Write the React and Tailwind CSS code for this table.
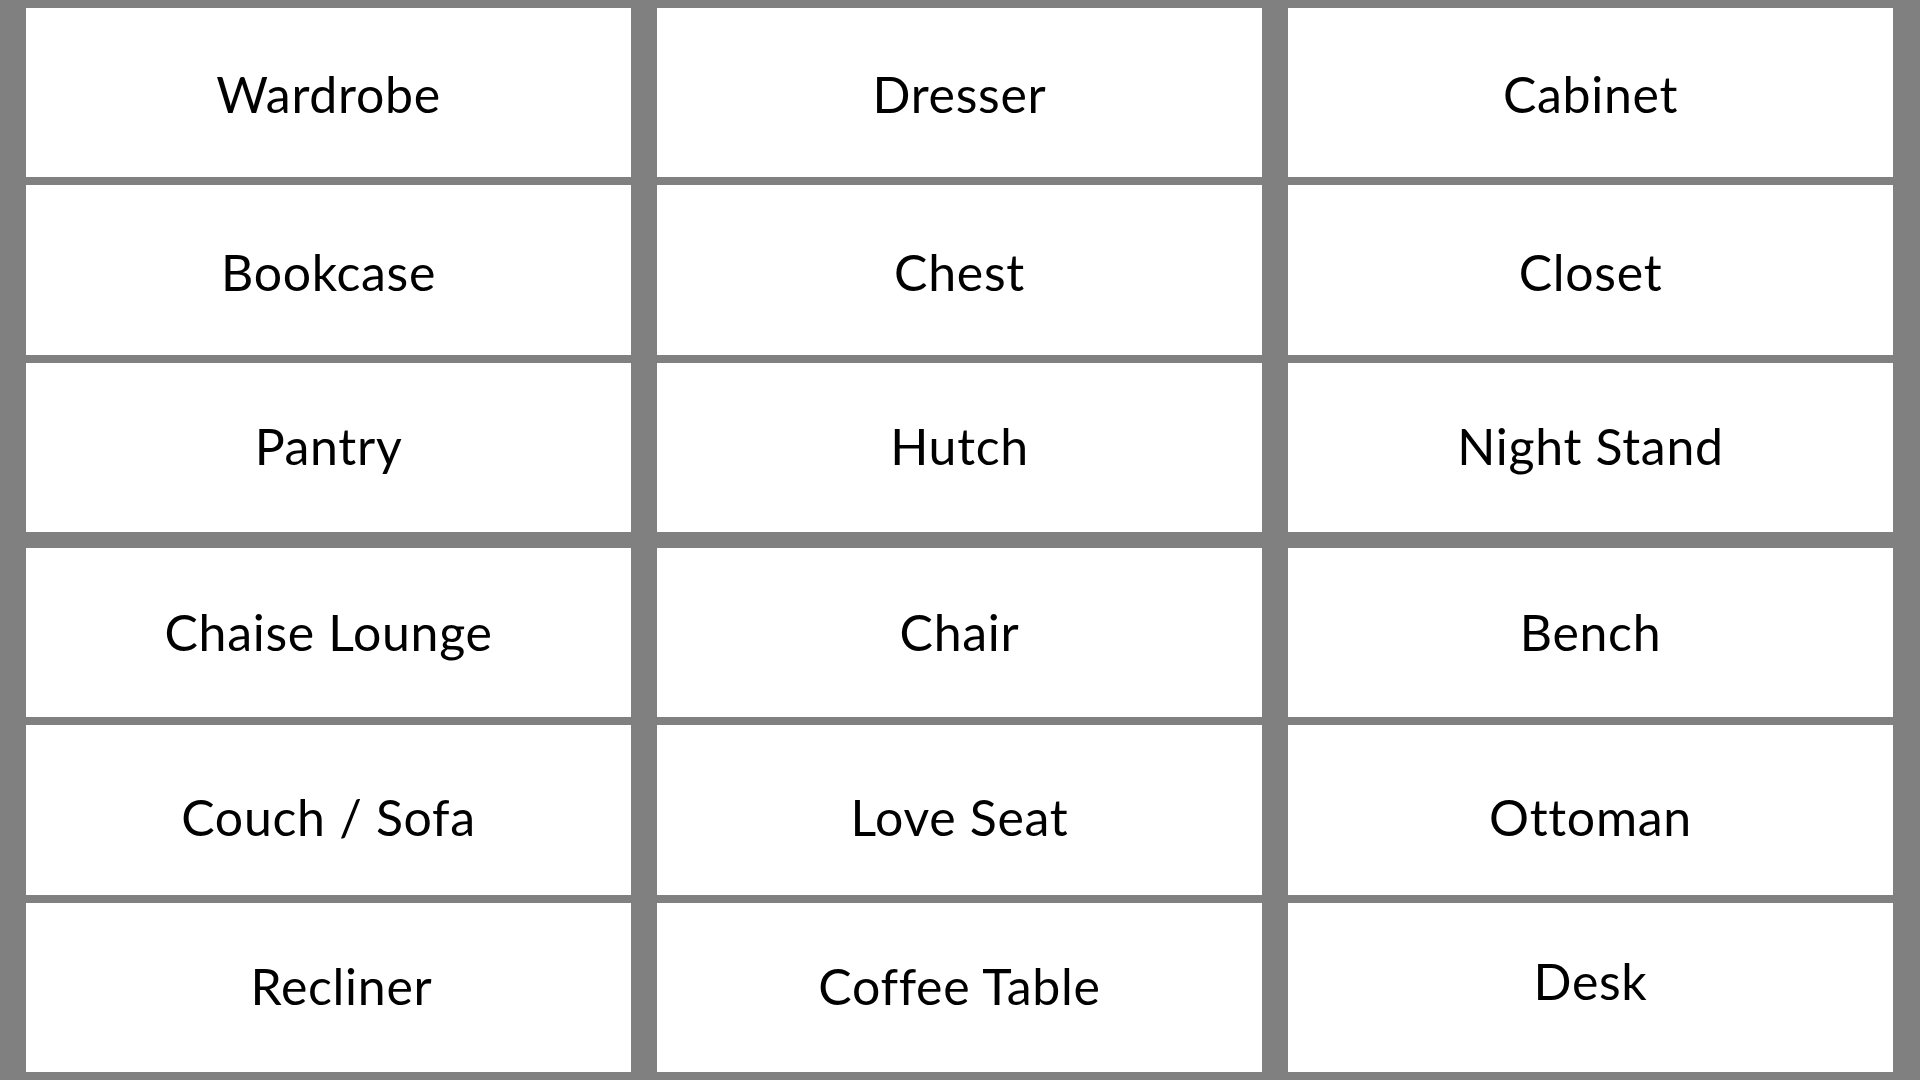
import React from "react";

const SHEETS = [
  [
    { label: "Wardrobe", className: "pt-[3px]" },
    { label: "Dresser", className: "pt-[3px]" },
    { label: "Cabinet", className: "pt-[3px]" },
    { label: "Bookcase", className: "pt-[5px]" },
    { label: "Chest", className: "pt-[5px]" },
    { label: "Closet", className: "pt-[5px]" },
    { label: "Pantry", className: "pb-[2px]" },
    { label: "Hutch", className: "pb-[2px]" },
    { label: "Night Stand", className: "pb-[2px]" },
  ],
  [
    { label: "Chaise Lounge", className: "pb-[2px]" },
    { label: "Chair", className: "pb-[2px]" },
    { label: "Bench", className: "pb-[2px]" },
    { label: "Couch / Sofa", className: "pt-[14px]" },
    { label: "Love Seat", className: "pt-[14px]" },
    { label: "Ottoman", className: "pt-[14px]" },
    { label: "Recliner", className: "pl-[26px] pb-[2px]" },
    { label: "Coffee Table", className: "pb-[2px]" },
    { label: "Desk", className: "pb-[12px]" },
  ],
];

const Card = ({ label, className = "" }) => (
  <div
    className={`flex items-center justify-center bg-white text-black text-[50px] leading-none tracking-[0.7px] ${className}`}
  >
    {label}
  </div>
);

const Sheet = ({ items }) => (
  <div className="grid h-[540px] grid-cols-3 grid-rows-3 gap-x-[26px] gap-y-[8px] pt-[8px] pb-[8px] pl-[26px] pr-[27px]">
    {items.map((item) => (
      <Card key={item.label} {...item} />
    ))}
  </div>
);

const App = () => {
  return (
    <div className="h-[1080px] w-[1920px] overflow-hidden bg-[#808080] font-['Lato','Open_Sans',sans-serif]">
      {SHEETS.map((items, i) => (
        <Sheet key={i} items={items} />
      ))}
    </div>
  );
};

export default App;
